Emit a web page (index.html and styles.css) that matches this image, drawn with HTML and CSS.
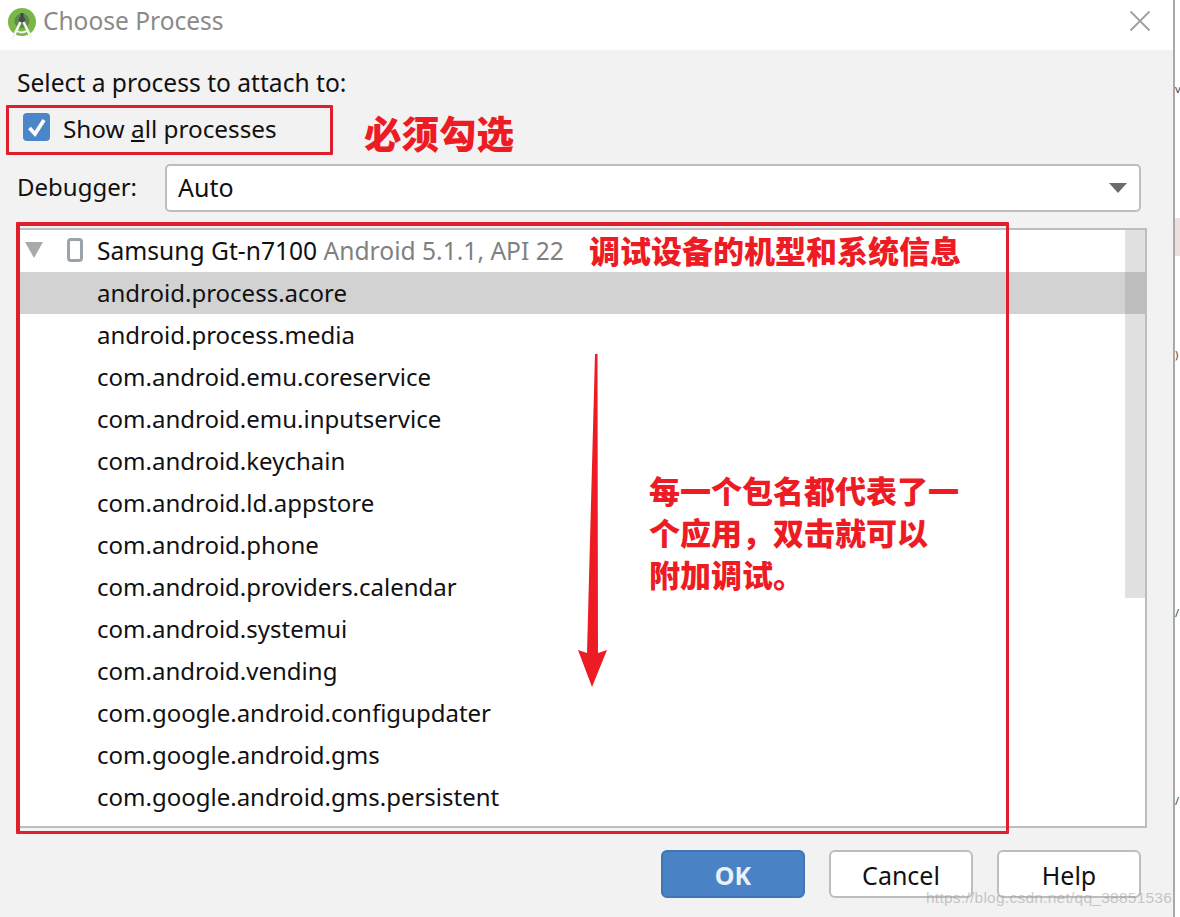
FILE: index.html
```html
<!DOCTYPE html>
<html lang="en">
<head>
<meta charset="utf-8">
<title>Choose Process</title>
<link rel="stylesheet" href="styles.css">
</head>
<body>
<div class="window">
  <header class="titlebar">
    <svg class="logo" width="30" height="32" viewBox="0 0 30 32">
      <circle cx="15" cy="14" r="14" fill="#7ab648"/>
      <circle cx="15" cy="13" r="7.500" fill="#5f8a4a"/>
      <path d="M15 5v6" stroke="#3c4a45" stroke-width="3"/>
      <circle cx="15" cy="12" r="3.200" fill="#3f4f4a"/>
      <path d="M13.500 14L5 31.500M16.500 14L25 31.500" stroke="#f4f6f1" stroke-width="2.600" fill="none"/>
      <path d="M10 23c3 2 7 2 11-1" stroke="#f4f6f1" stroke-width="2" fill="none"/>
    </svg>
    <span class="title">Choose Process</span>
    <svg class="close" width="22" height="22" viewBox="0 0 22 22"><path d="M1.500 1.500l19 19M20.500 1.500l-19 19" stroke="#a0a0a0" stroke-width="1.800" fill="none"/></svg>
  </header>
  <main class="body">
    <div class="prompt">Select a process to attach to:</div>
    <label class="check-row">
      <span class="checkbox"><svg width="27" height="28" viewBox="0 0 27 28"><path d="M6.500 15l5.500 6L21 7" stroke="#fff" stroke-width="3.800" fill="none"/></svg></span>
      <span class="check-text">Show <u>a</u>ll processes</span>
    </label>
    <div class="debugger-row">
      <span class="debugger-label">Debugger:</span>
      <div class="select"><span class="select-value">Auto</span><i class="caret"></i></div>
    </div>
    <div class="list">
      <div class="rows">
        <div class="row device">
          <i class="tree-arrow"></i>
          <svg class="phone" width="16" height="24" viewBox="0 0 16 24"><rect x="1.500" y="1.500" width="13" height="21" rx="2.500" fill="#fff" stroke="#98a3ab" stroke-width="3"/></svg>
          <span>Samsung Gt-n7100 <span class="muted">Android 5.1.1, API 22</span></span>
        </div>
        <div class="row proc selected">android.process.acore</div>
        <div class="row proc">android.process.media</div>
        <div class="row proc">com.android.emu.coreservice</div>
        <div class="row proc">com.android.emu.inputservice</div>
        <div class="row proc">com.android.keychain</div>
        <div class="row proc">com.android.ld.appstore</div>
        <div class="row proc">com.android.phone</div>
        <div class="row proc">com.android.providers.calendar</div>
        <div class="row proc">com.android.systemui</div>
        <div class="row proc">com.android.vending</div>
        <div class="row proc">com.google.android.configupdater</div>
        <div class="row proc">com.google.android.gms</div>
        <div class="row proc">com.google.android.gms.persistent</div>
      </div>
      <div class="scrollbar"></div>
    </div>
    <footer class="buttons">
      <button class="btn primary">OK</button>
      <button class="btn">Cancel</button>
      <button class="btn">Help</button>
    </footer>
  </main>
</div>

<div class="frag frag-pink"></div>
<div class="frag frag-glyph frag-a">v</div>
<div class="frag frag-glyph frag-b">)</div>
<div class="frag frag-glyph frag-c">/</div>
<div class="frag frag-glyph frag-d">/</div>

<div class="mark mark-check"></div>
<div class="mark mark-list"></div>
<div class="note note-check">必须勾选</div>
<div class="note note-device">调试设备的机型和系统信息</div>
<div class="note note-para">每一个包名都代表了一<br>个应用，双击就可以<br>附加调试。</div>
<svg class="arrow" width="40" height="340" viewBox="0 0 40 340"><path d="M17 0h2.500L20 299l9-3-15 37L0 296l9 3z" fill="#ed1c24"/></svg>
<div class="watermark">https://blog.csdn.net/qq_38851536</div>
</body>
</html>
```
FILE: styles.css
```css
* { box-sizing: border-box; }
html, body { margin: 0; padding: 0; }
body {
  width: 1180px;
  height: 917px;
  overflow: hidden;
  position: relative;
  background: #fff;
  font-family: "Noto Sans", "Open Sans", sans-serif;
  font-size: 24px;
  color: #111;
}
.window {
  width: 1175px;
  height: 917px;
  border-right: 2px solid #a9a9a9;
  display: flex;
  flex-direction: column;
}
.titlebar {
  height: 50px;
  flex: none;
  background: #fff;
  display: flex;
  align-items: center;
  padding: 0 22px 9px 7px;
}
.logo { flex: none; margin-top: 6px; }
.title { margin-left: 6px; color: #8a8a8a; font-size: 24.500px; flex: 1; }
.close { flex: none; }
.body {
  flex: 1;
  background: #f2f2f2;
  padding: 15px 26px 0 17px;
  display: flex;
  flex-direction: column;
}
.prompt { height: 37px; line-height: 36px; font-size: 24.600px; }
.check-row {
  height: 50px;
  display: flex;
  align-items: center;
  padding-left: 6px;
  gap: 13px;
  margin-top: 3px;
}
.check-text { font-size: 24.300px; margin-bottom: 3px; }
.checkbox {
  width: 27px;
  height: 28px;
  border-radius: 4px;
  background: #4a86c8;
  display: block;
  flex: none;
  margin-bottom: 6px;
}
.checkbox svg { display: block; }
.debugger-row {
  display: flex;
  align-items: center;
  margin-top: 9px;
  height: 48px;
}
.debugger-label { width: 148px; flex: none; margin-bottom: 3px; }
.select {
  width: 976px;
  height: 48px;
  background: #fff;
  border: 2px solid #bdbdbd;
  border-radius: 5px;
  display: flex;
  align-items: center;
  justify-content: space-between;
  padding: 0 12px 0 11px;
}
.select-value { font-size: 25px; margin-bottom: 3px; }
.caret {
  width: 0;
  height: 0;
  border-left: 9px solid transparent;
  border-right: 9px solid transparent;
  border-top: 10px solid #6b6b6b;
}
.list {
  margin-top: 16px;
  width: 1130px;
  height: 600px;
  flex: none;
  background: #fff;
  border: 2px solid #bdbdbd;
  border-left-width: 3px;
  position: relative;
  overflow: hidden;
}
.rows { display: flex; flex-direction: column; }
.row {
  height: 42px;
  flex: none;
  display: flex;
  align-items: center;
  white-space: pre;
  padding: 0 0 2px 77px;
}
.selected { background: #d2d2d2; }
.device { padding-left: 5px; font-size: 24.600px; }
.tree-arrow {
  width: 0;
  height: 0;
  border-left: 9px solid transparent;
  border-right: 9px solid transparent;
  border-top: 16px solid #a9a9a9;
  margin-right: 24px;
  flex: none;
}
.phone { flex: none; margin-right: 14px; }
.muted { color: #808080; }
.scrollbar {
  position: absolute;
  top: 0;
  right: 0;
  width: 20px;
  height: 368px;
  background: rgba(120, 120, 120, .22);
}
.buttons {
  display: flex;
  justify-content: flex-end;
  gap: 24px;
  margin-top: 22px;
  padding-right: 6px;
}
.btn {
  width: 144px;
  height: 48px;
  font: inherit;
  font-size: 25px;
  color: #111;
  background: #fff;
  border: 2px solid #bdbdbd;
  border-radius: 6px;
  padding: 1px 0 0;
}
.primary {
  background: #4a82c6;
  border-color: #3f74b5;
  color: #e8f0f8;
  font-weight: 700;
}
.frag { position: absolute; }
.frag-pink { left: 1175px; top: 218px; width: 5px; height: 38px; background: #efdede; }
.frag-glyph { left: 1175px; font-size: 11px; line-height: 14px; color: #444; }
.frag-a { top: 82px; }
.frag-b { top: 348px; }
.frag-c { top: 606px; }
.frag-d { top: 794px; }
.mark { position: absolute; border: 3px solid #e01f2d; border-radius: 1px; pointer-events: none; }
.mark-check { left: 6px; top: 105px; width: 327px; height: 50px; }
.mark-list { left: 16px; top: 222px; width: 993px; height: 612px; border-width: 4px 3px 3px 4px; }
.note {
  position: absolute;
  color: #ed1c24;
  font-family: "Noto Sans CJK SC", sans-serif;
  font-weight: 900;
  white-space: nowrap;
}
.note-check { left: 364px; top: 106px; font-size: 37.500px; line-height: 52px; }
.note-device { left: 589px; top: 228px; font-size: 31px; line-height: 44px; }
.note-para { left: 649px; top: 468.500px; font-size: 31px; line-height: 42px; }
.arrow { position: absolute; left: 578px; top: 354px; }
.watermark {
  position: absolute;
  left: 926px;
  top: 889px;
  font-family: "Liberation Sans", sans-serif;
  font-size: 15.500px;
  letter-spacing: .25px;
  color: rgba(150, 150, 150, .5);
  white-space: nowrap;
}
```
